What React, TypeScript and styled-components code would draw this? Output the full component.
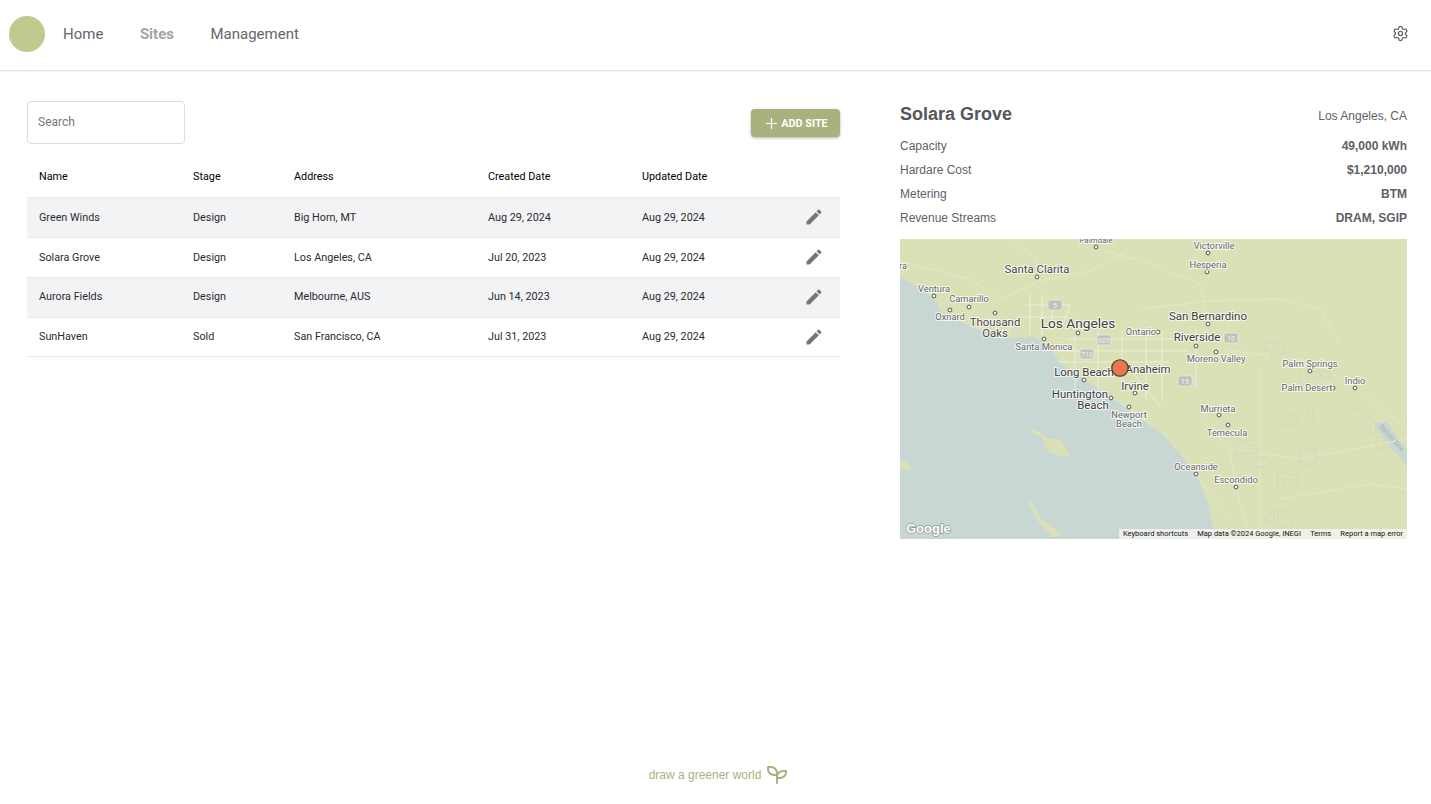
import styled, { createGlobalStyle } from "styled-components"
import { Settings } from "lucide-react"

const sites = [
  { name: "Green Winds", stage: "Design", address: "Big Horn, MT", created: "Aug 29, 2024", updated: "Aug 29, 2024" },
  { name: "Solara Grove", stage: "Design", address: "Los Angeles, CA", created: "Jul 20, 2023", updated: "Aug 29, 2024" },
  { name: "Aurora Fields", stage: "Design", address: "Melbourne, AUS", created: "Jun 14, 2023", updated: "Aug 29, 2024" },
  { name: "SunHaven", stage: "Sold", address: "San Francisco, CA", created: "Jul 31, 2023", updated: "Aug 29, 2024" },
]

const details = [
  ["Capacity", "49,000 kWh"],
  ["Hardare Cost", "$1,210,000"],
  ["Metering", "BTM"],
  ["Revenue Streams", "DRAM, SGIP"],
]

// label, centre x, centre y (map coordinates), font size, colour
const places: [string, number, number, number, string][] = [
  ["Palmdale", 196, 1, 8, "#666"],
  ["Victorville", 314, 7, 9.3, "#666"],
  ["Hesperia", 308, 26, 9.3, "#666"],
  ["Santa Clarita", 137, 30, 11.4, "#484848"],
  ["Ventura", 34, 50, 9.3, "#666"],
  ["Camarillo", 69, 60, 9.3, "#666"],
  ["Oxnard", 50, 78, 9.3, "#666"],
  ["Thousand", 95, 83, 11.4, "#484848"],
  ["Oaks", 95, 94, 11.4, "#484848"],
  ["Los Angeles", 178, 84, 13.7, "#404040"],
  ["Ontario", 241, 93, 9.3, "#666"],
  ["Santa Monica", 144, 108, 9.3, "#666"],
  ["San Bernardino", 308, 77, 11.5, "#404040"],
  ["Riverside", 297, 98, 11.5, "#404040"],
  ["Moreno Valley", 316, 120, 9.3, "#666"],
  ["Palm Springs", 410, 125, 9.3, "#666"],
  ["Palm Desert", 407, 149, 9.3, "#666"],
  ["Indio", 455, 142, 9.3, "#666"],
  ["Long Beach", 184, 133, 11.4, "#404040"],
  ["Anaheim", 248, 130, 11.4, "#404040"],
  ["Irvine", 235, 147, 11.4, "#404040"],
  ["Huntington", 180, 155, 11.4, "#404040"],
  ["Beach", 193, 166, 11.4, "#404040"],
  ["Newport", 229, 176, 9.3, "#666"],
  ["Beach", 229, 185, 9.3, "#666"],
  ["Murrieta", 318, 170, 9.3, "#666"],
  ["Temecula", 327, 194, 9.3, "#666"],
  ["Oceanside", 296, 228, 9.3, "#666"],
  ["Escondido", 336, 241, 9.3, "#666"],
]

const dots = [
  [196, 8], [308, 14], [307, 33], [137, 38], [34, 57], [50, 71], [69, 68], [95, 74],
  [178, 94], [144, 100], [258, 93], [308, 85], [296, 107], [316, 113], [410, 132],
  [433, 149], [455, 149], [184, 141], [235, 154], [211, 159], [229, 168], [319, 176],
  [328, 186], [296, 235], [336, 248],
]

const shields: [string, number, number][] = [
  ["5", 155, 66],
  ["605", 204, 101],
  ["710", 187, 115],
  ["10", 331, 99],
  ["15", 285, 142],
]

const cityRoads = [
  "M130 55V95M142 55V97M152 60V92M125 66H170M125 78H168M162 88L170 66",
  "M158 112H290M158 123H270M175 96V150M198 92V160M222 92V150M246 96V160M168 100H300",
  "M200 150L250 185M230 130L262 170M262 92V160M296 90V150",
]

const ruralRoads = [
  "M100 60L140 42L190 32L230 10M140 42L136 20L110 0M0 22L70 40L100 60",
  "M240 70L308 62L380 60L420 70L440 105M308 85L300 45L250 25L200 10",
  "M420 125L470 160L507 190M300 180L330 210L400 220L507 200M330 210L336 250L350 300",
  "M296 235L330 280M360 130V290M380 260L470 245L507 250M320 110L410 122",
]

const parcels = [
  "M365 103h12v4h8v8h-5v3h-9v-6h-6z",
  "M377 180h9v-4h12v10h-21z",
  "M407 169h6v12h-6z",
  "M400 211h16v12l-6 5-10-6z",
  "M335 207l5-6h8v5h10v8h-15l-4 2h-4z",
  "M350 226l3-6 8-2 11 5-8 5h-8l-2 3h-4z",
  "M377 234h10l12 2v12l-8-8h-6l-2 6h3l-2 6h-6z",
  "M365 280l5-4 4-8v14h-9zM378 271h7l8 14-6 3h-9z",
  "M400 132h8v12h-8zM412 132h8v6h-8zM422 132h8v6h-8z",
  "M453 169h7v4h-7zM462 174h8v6h-8zM470 184h6v10h-6zM476 198h8v12h-8z",
]

export default function App() {
  return (
    <>
      <GlobalStyle />
      <Page>
        <Header>
          <NavGroup>
            <Logo />
            <NavLink>Home</NavLink>
            <NavLink $active>Sites</NavLink>
            <NavLink>Management</NavLink>
          </NavGroup>
          <SettingsButton>
            <Settings size={17} strokeWidth={1.8} />
          </SettingsButton>
        </Header>

        <Main>
          <LeftPanel>
            <Toolbar>
              <SearchInput placeholder="Search" />
              <AddButton>
                <svg viewBox="0 0 14 14" width="13" height="13">
                  <path d="M7 1v12M1 7h12" stroke="#fff" strokeWidth="1.3" fill="none" />
                </svg>
                ADD SITE
              </AddButton>
            </Toolbar>
            <Table>
              <thead>
                <tr>
                  <HeadCell $width={154}>Name</HeadCell>
                  <HeadCell $width={101}>Stage</HeadCell>
                  <HeadCell $width={194}>Address</HeadCell>
                  <HeadCell $width={154}>Created Date</HeadCell>
                  <HeadCell $width={155}>Updated Date</HeadCell>
                  <HeadCell />
                </tr>
              </thead>
              <tbody>
                {sites.map((site) => (
                  <Row key={site.name}>
                    <Cell>{site.name}</Cell>
                    <Cell>{site.stage}</Cell>
                    <Cell>{site.address}</Cell>
                    <Cell>{site.created}</Cell>
                    <Cell>{site.updated}</Cell>
                    <IconCell>
                      <EditIcon viewBox="0 0 24 24">
                        <path d="M3 17.25V21h3.75L17.81 9.94l-3.75-3.75L3 17.25zM20.71 7.04c.39-.39.39-1.02 0-1.41l-2.34-2.34c-.39-.39-1.02-.39-1.41 0l-1.83 1.83 3.75 3.75 1.83-1.83z" />
                      </EditIcon>
                    </IconCell>
                  </Row>
                ))}
              </tbody>
            </Table>
          </LeftPanel>

          <RightPanel>
            <TitleRow>
              <Title>Solara Grove</Title>
              <Location>Los Angeles, CA</Location>
            </TitleRow>
            {details.map(([label, value]) => (
              <DetailRow key={label}>
                <span>{label}</span>
                <DetailValue>{value}</DetailValue>
              </DetailRow>
            ))}
            <MapFrame>
              <svg viewBox="0 0 507 300" width="507" height="300">
                <rect width="507" height="300" fill="#c8d7d4" />
                <path
                  d="M0 38L17 48L35 61L40 71L67 86L100 99L133 98L147 104L157 119L167 129L187 143L207 153L227 168L247 184L263 196L283 218L297 238L308 264L313 288L317 300H507V0H0Z"
                  fill="#dbe1b7"
                />
                <path d="M473 184L487 183L507 211V226L490 208Z" fill="#c8d7d4" />
                <path d="M130 189L140 193L147 199L160 201L170 216L165 218L150 214L145 208L142 198L133 194Z" fill="#dbe1b7" />
                <path d="M128 263L133 263L140 279L163 296L153 298L137 281Z" fill="#dbe1b7" />
                <path d="M0 221L7 224L15 230L7 231L0 229Z" fill="#dbe1b7" />
                <path d={ruralRoads.join("")} stroke="#e3e7c9" strokeWidth="1" fill="none" />
                <path d={cityRoads.join("")} stroke="#eceedb" strokeWidth="1" fill="none" />
                <path d={parcels.join("")} stroke="#d2d7bd" strokeWidth="1" fill="none" />
                {shields.map(([label, x, y]) => (
                  <g key={label}>
                    <rect x={x - 7} y={y - 5} width="14" height="10" rx="2" fill="#bcc3bd" stroke="#eef0e6" strokeWidth="0.7" />
                    <ShieldLabel x={x} y={y + 2.5}>{label}</ShieldLabel>
                  </g>
                ))}
                {dots.map(([x, y]) => (
                  <circle key={`${x}-${y}`} cx={x} cy={y} r="1.9" fill="#fff" stroke="#555" strokeWidth="1" />
                ))}
                {places.map(([label, x, y, size, color]) => (
                  <PlaceLabel key={`${label}-${x}`} x={x} y={y + size * 0.36} fontSize={size} fill={color}>
                    {label}
                  </PlaceLabel>
                ))}
                <PlaceLabel x={3} y={30} fontSize={9} fill="#666">ra</PlaceLabel>
                <SeaLabel x={490} y={200} transform="rotate(48 490 200)">Salton Sea</SeaLabel>
                <circle cx="220" cy="129" r="8.2" fill="#ec7650" stroke="#3c2b22" strokeWidth="1.1" />
                <GoogleMark x="6" y="294">Google</GoogleMark>
              </svg>
              <Attribution>
                <span>Keyboard shortcuts</span>
                <span>Map data ©2024 Google, INEGI</span>
                <span>Terms</span>
                <span>Report a map error</span>
              </Attribution>
            </MapFrame>
          </RightPanel>
        </Main>

        <Footer>
          draw a greener world
          <svg viewBox="0 0 24 24" width="24" height="24" fill="none" stroke="#abb17e" strokeWidth="2" strokeLinecap="round" strokeLinejoin="round">
            <path d="M12 10a6 6 0 0 0 -6 -6h-3v2a6 6 0 0 0 6 6h3" />
            <path d="M12 14a6 6 0 0 1 6 -6h3v1a6 6 0 0 1 -6 6h-3" />
            <path d="M12 20v-10" />
          </svg>
        </Footer>
      </Page>
    </>
  )
}

const GlobalStyle = createGlobalStyle`
  * {
    box-sizing: border-box;
  }
  body {
    margin: 0;
    background: #fff;
    font-family: Roboto, "Liberation Sans", sans-serif;
  }
`

const Page = styled.div`
  height: 804px;
  display: flex;
  flex-direction: column;
  overflow: hidden;
`

const Header = styled.header`
  height: 71px;
  flex-shrink: 0;
  display: flex;
  align-items: center;
  justify-content: space-between;
  padding: 0 22px 3px 9px;
  border-bottom: 1px solid #e4e4e6;
  box-shadow: 0 1px 1px rgba(0, 0, 0, 0.03);
`

const NavGroup = styled.nav`
  display: flex;
  align-items: center;
`

const Logo = styled.div`
  width: 36px;
  height: 36px;
  border-radius: 50%;
  background: #c2c98f;
  margin-right: 18px;
`

const NavLink = styled.a<{ $active?: boolean }>`
  font-size: 15px;
  font-weight: ${(p) => (p.$active ? 700 : 400)};
  color: ${(p) => (p.$active ? "#a3a3a8" : "#66666c")};
  margin-right: 36.5px;
  cursor: pointer;
`

const SettingsButton = styled.div`
  display: flex;
  color: #626266;
`

const Main = styled.main`
  display: flex;
  padding: 30px 24px 0 27px;
  gap: 60px;
`

const LeftPanel = styled.section`
  width: 813px;
  flex-shrink: 0;
`

const Toolbar = styled.div`
  height: 56px;
  display: flex;
  align-items: flex-start;
  justify-content: space-between;
`

const SearchInput = styled.input`
  width: 158px;
  height: 43px;
  padding: 0 10px 2px;
  border: 1px solid #dcdcde;
  border-radius: 4px;
  outline: none;
  font-family: inherit;
  font-size: 12px;

  &::placeholder {
    color: #77777a;
    opacity: 1;
  }
`

const AddButton = styled.button`
  width: 89px;
  height: 28px;
  margin-top: 8px;
  padding: 0 0 0 2px;
  display: flex;
  align-items: center;
  justify-content: center;
  gap: 3px;
  border: none;
  border-radius: 4px;
  background: #abb17e;
  color: #fff;
  font-family: inherit;
  font-size: 10.8px;
  font-weight: 700;
  box-shadow: 0 1px 3px rgba(0, 0, 0, 0.3);
  cursor: pointer;
`

const Table = styled.table`
  width: 813px;
  border-collapse: collapse;
  table-layout: fixed;
`

const HeadCell = styled.th<{ $width?: number }>`
  ${(p) => (p.$width ? `width: ${p.$width}px;` : "")}
  height: 40px;
  padding: 0 12px;
  text-align: left;
  font-size: 10.8px;
  font-weight: 400;
  color: #000;
  border-bottom: 1px solid #eeeeef;
`

const Row = styled.tr`
  &:nth-child(odd) {
    background: #f2f3f5;
  }
  &:nth-child(3) td:not(:last-child) {
    padding-bottom: 2px;
  }
  &:last-child td {
    height: 39px;
  }
`

const Cell = styled.td`
  height: 40px;
  padding: 0 12px;
  font-size: 10.8px;
  color: #2b2b30;
  border-bottom: 1px solid #e8e8ea;
  box-shadow: inset -1px 0 0 rgba(255, 255, 255, 0.2);
`

const IconCell = styled(Cell)`
  padding: 0 16px 0 0;
`

const EditIcon = styled.svg`
  display: block;
  width: 20px;
  height: 20px;
  margin-left: auto;
  fill: #757575;
`

const RightPanel = styled.aside`
  width: 507px;
  flex-shrink: 0;
  color: #5f5f66;
`

const TitleRow = styled.div`
  height: 26px;
  display: flex;
  align-items: center;
  justify-content: space-between;
  margin-bottom: 7px;
  font-family: "Liberation Sans", Arial, sans-serif;
`

const Title = styled.h2`
  margin: 0;
  font-size: 18px;
  font-weight: 700;
  color: #55555b;
`

const Location = styled.span`
  font-size: 12px;
  padding-top: 3px;
`

const DetailRow = styled.div`
  height: 24px;
  display: flex;
  align-items: center;
  justify-content: space-between;
  font-family: "Liberation Sans", Arial, sans-serif;
  font-size: 12px;
`

const DetailValue = styled.span`
  font-weight: 700;
`

const MapFrame = styled.div`
  position: relative;
  width: 507px;
  height: 300px;
  margin-top: 9px;

  svg {
    display: block;
  }
`

const PlaceLabel = styled.text`
  font-family: Roboto, "Liberation Sans", sans-serif;
  text-anchor: middle;
  paint-order: stroke;
  stroke: rgba(255, 255, 255, 0.75);
  stroke-width: 2px;
`

const SeaLabel = styled.text`
  font-family: Roboto, "Liberation Sans", sans-serif;
  font-size: 7px;
  text-anchor: middle;
  fill: #a8b5a0;
`

const ShieldLabel = styled.text`
  font-family: Roboto, "Liberation Sans", sans-serif;
  font-size: 7px;
  text-anchor: middle;
  fill: #f3f4ee;
`

const GoogleMark = styled.text`
  font-family: "Liberation Sans", Arial, sans-serif;
  font-size: 13px;
  font-weight: 700;
  fill: #fff;
  paint-order: stroke;
  stroke: #8c9590;
  stroke-width: 1.3px;
`

const Attribution = styled.div`
  position: absolute;
  right: 0;
  bottom: 0;
  width: 288px;
  height: 10px;
  display: flex;
  justify-content: space-between;
  align-items: center;
  padding: 0 4px;
  background: rgba(245, 245, 240, 0.8);
  font-family: Roboto, "Liberation Sans", sans-serif;
  font-size: 7.5px;
  line-height: 10px;
  color: #111;
  white-space: nowrap;
`

const Footer = styled.footer`
  margin-top: auto;
  height: 58px;
  padding: 0 0 1px 7px;
  display: flex;
  align-items: center;
  justify-content: center;
  gap: 4px;
  font-family: "Liberation Sans", Arial, sans-serif;
  font-size: 12px;
  color: #abb17e;
`
